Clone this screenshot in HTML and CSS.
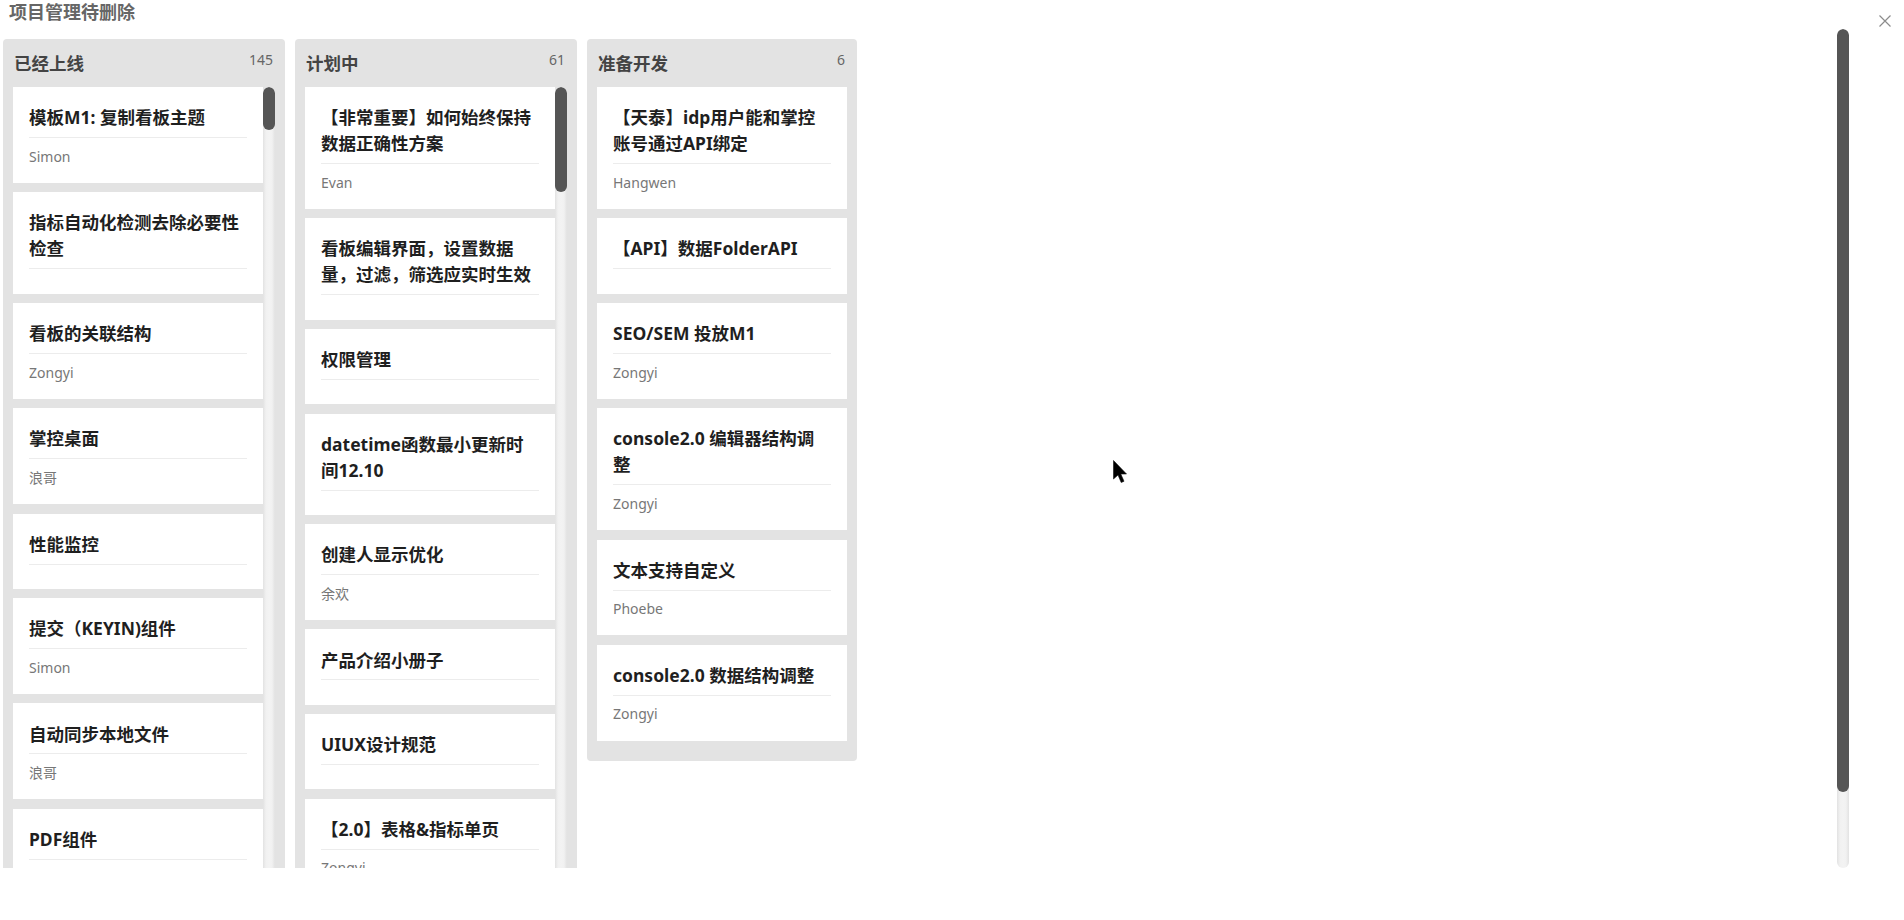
FILE: index.html
```html
<!DOCTYPE html>
<html lang="zh-CN">
<head>
<meta charset="utf-8">
<title>项目管理待删除</title>
<link rel="stylesheet" href="styles.css">
</head>
<body>
<div class="topbar">
  <h1 class="page-title">项目管理待删除</h1>
  <button class="close" type="button" aria-label="关闭">
    <svg width="12" height="12" viewBox="0 0 12 12"><path d="M0.5 0.5 L11.5 11.5 M11.5 0.5 L0.5 11.5" stroke="#8c8c8c" stroke-width="1.2" fill="none"/></svg>
  </button>
</div>
<div class="board">
  <div class="board-view">
    <div class="lanes">
      <section class="lane lane--full">
        <header class="lane-head"><h2 class="lane-name">已经上线</h2><span class="lane-count">145</span></header>
        <div class="lane-body">
          <div class="lane-list">
            <article class="card"><h3 class="card-title">模板M1: 复制看板主题</h3><div class="card-foot">Simon</div></article>
            <article class="card"><h3 class="card-title">指标自动化检测去除必要性检查</h3><div class="card-foot"></div></article>
            <article class="card"><h3 class="card-title">看板的关联结构</h3><div class="card-foot">Zongyi</div></article>
            <article class="card"><h3 class="card-title">掌控桌面</h3><div class="card-foot">浪哥</div></article>
            <article class="card"><h3 class="card-title">性能监控</h3><div class="card-foot"></div></article>
            <article class="card"><h3 class="card-title">提交（KEYIN)组件</h3><div class="card-foot">Simon</div></article>
            <article class="card"><h3 class="card-title">自动同步本地文件</h3><div class="card-foot">浪哥</div></article>
            <article class="card"><h3 class="card-title">PDF组件</h3><div class="card-foot"></div></article>
          </div>
          <div class="rail" aria-hidden="true"><div class="rail-thumb rail-thumb--long"></div></div>
        </div>
      </section>
      <section class="lane lane--full">
        <header class="lane-head"><h2 class="lane-name">计划中</h2><span class="lane-count">61</span></header>
        <div class="lane-body">
          <div class="lane-list">
            <article class="card"><h3 class="card-title">【非常重要】如何始终保持数据正确性方案</h3><div class="card-foot">Evan</div></article>
            <article class="card"><h3 class="card-title">看板编辑界面，设置数据量，过滤，筛选应实时生效</h3><div class="card-foot"></div></article>
            <article class="card"><h3 class="card-title">权限管理</h3><div class="card-foot"></div></article>
            <article class="card"><h3 class="card-title">datetime函数最小更新时间12.10</h3><div class="card-foot"></div></article>
            <article class="card"><h3 class="card-title">创建人显示优化</h3><div class="card-foot">余欢</div></article>
            <article class="card"><h3 class="card-title">产品介绍小册子</h3><div class="card-foot"></div></article>
            <article class="card"><h3 class="card-title">UIUX设计规范</h3><div class="card-foot"></div></article>
            <article class="card"><h3 class="card-title">【2.0】表格&amp;指标单页</h3><div class="card-foot">Zongyi</div></article>
          </div>
          <div class="rail" aria-hidden="true"><div class="rail-thumb rail-thumb--mid"></div></div>
        </div>
      </section>
      <section class="lane">
        <header class="lane-head"><h2 class="lane-name">准备开发</h2><span class="lane-count">6</span></header>
        <div class="lane-body">
          <div class="lane-list">
            <article class="card"><h3 class="card-title">【天泰】idp用户能和掌控账号通过API绑定</h3><div class="card-foot">Hangwen</div></article>
            <article class="card"><h3 class="card-title">【API】数据FolderAPI</h3><div class="card-foot"></div></article>
            <article class="card"><h3 class="card-title">SEO/SEM 投放M1</h3><div class="card-foot">Zongyi</div></article>
            <article class="card"><h3 class="card-title">console2.0 编辑器结构调整</h3><div class="card-foot">Zongyi</div></article>
            <article class="card"><h3 class="card-title">文本支持自定义</h3><div class="card-foot">Phoebe</div></article>
            <article class="card"><h3 class="card-title">console2.0 数据结构调整</h3><div class="card-foot">Zongyi</div></article>
          </div>
        </div>
      </section>
    </div>
  </div>
  <div class="rail rail--board" aria-hidden="true"><div class="rail-thumb rail-thumb--board"></div></div>
</div>
<svg class="pointer" width="16" height="24" viewBox="0 0 16 24" aria-hidden="true"><path d="M0.5 0.5 V19 L5 15 L8.2 22.5 L11 21.3 L7.8 14 H13.5 Z" fill="#000" stroke="#111" stroke-width="0.6"/></svg>
</body>
</html>
```

FILE: styles.css
```css
html, body {
  margin: 0;
  padding: 0;
  background: #fff;
  overflow: hidden;
}

body {
  font-family: "Noto Sans", "Noto Sans CJK SC", sans-serif;
  color: #222;
  width: 1904px;
  height: 920px;
  position: relative;
}

.topbar {
  height: 29px;
  display: flex;
  justify-content: space-between;
  align-items: flex-start;
  padding: 0 13px 0 9px;
}

.page-title {
  margin: 0;
  font-size: 18px;
  line-height: 25px;
  font-weight: 700;
  color: #666;
}

.close {
  margin-top: 15px;
  padding: 0;
  border: 0;
  background: none;
  width: 12px;
  height: 12px;
  display: block;
  cursor: pointer;
}

.close svg {
  display: block;
}

/* board with its own drawn scrollbar rail */
.board {
  display: flex;
  width: 1849px;
  height: 839px;
}

.board-view {
  flex: 1 1 auto;
  min-width: 0;
  overflow: hidden;
}

.rail {
  flex: none;
  width: 12px;
  background: linear-gradient(to right, #e2e2e2 0, #f1f1f1 3px, #f3f3f3 6px, #f1f1f1 9px, #e2e2e2 12px);
  border-radius: 6px;
  overflow: hidden;
}

.rail-thumb {
  background: #555;
  border-radius: 6px;
}

.rail-thumb--board {
  height: 763px;
}

.rail-thumb--long {
  height: 42.6px;
}

.rail-thumb--mid {
  height: 104.7px;
}

.lanes {
  display: flex;
  align-items: flex-start;
  gap: 10px;
  padding: 10px 0 10px 3px;
}

.lane {
  flex: none;
  display: flex;
  flex-direction: column;
  background: #e3e3e3;
  border-radius: 4px;
  padding: 0 10px 10px;
}

.lane--full {
  height: 900px;
  box-sizing: border-box;
}

.lane-head {
  flex: none;
  height: 48px;
  display: flex;
  justify-content: space-between;
  align-items: flex-start;
  padding: 11px 2px 0 1px;
  box-sizing: border-box;
}

.lane-name {
  margin: 0;
  font-size: 17.5px;
  line-height: 26px;
  font-weight: 700;
  color: #444;
}

.lane-count {
  font-size: 14px;
  line-height: 20px;
  color: #666;
}

.lane-body {
  flex: 1 1 auto;
  min-height: 0;
  display: flex;
}

.lane-list {
  flex: none;
  width: 250px;
  overflow: hidden;
  display: flex;
  flex-direction: column;
  gap: 9.33px;
  padding-bottom: 10px;
}

.card {
  flex: none;
  box-sizing: border-box;
  background: #fff;
  padding: 0 16px;
}

.card-title {
  margin: 0;
  padding: 17.1px 0 6.9px;
  font-size: 17.5px;
  line-height: 26px;
  font-weight: 700;
  color: #1f1f1f;
  border-bottom: 1px solid #ececec;
}

.card-foot {
  padding: 8.67px 0 15.67px;
  font-size: 14px;
  line-height: 20.67px;
  color: #777;
}

.pointer {
  position: absolute;
  left: 1113px;
  top: 460px;
  pointer-events: none;
}
```
